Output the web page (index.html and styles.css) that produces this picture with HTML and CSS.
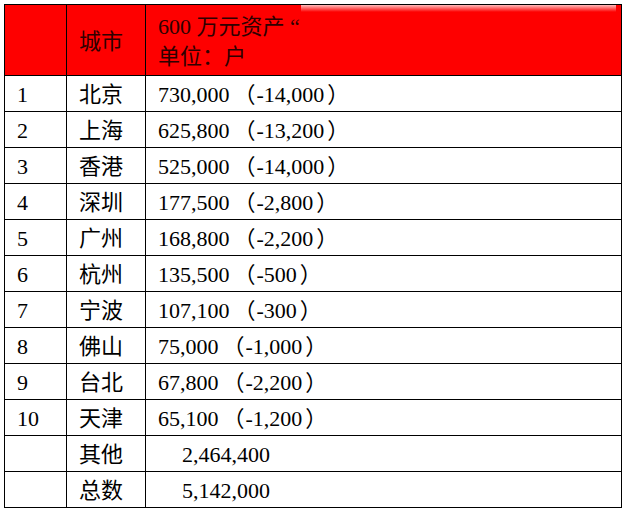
FILE: index.html
```html
<!DOCTYPE html>
<html lang="zh">
<head>
<meta charset="utf-8">
<title>600 万元资产</title>
<link rel="stylesheet" href="styles.css">
</head>
<body>
<table class="t">
  <colgroup><col class="c1"><col class="c2"><col class="c3"></colgroup>
  <thead>
    <tr class="head">
      <th></th>
      <th class="city">城市</th>
      <th class="val"><span class="hl">600 万元资产 “</span><span class="hl">单位：户</span></th>
    </tr>
  </thead>
  <tbody>
    <tr><td>1</td><td>北京</td><td>730,000<span class="lp">（</span>-14,000<span class="rp">）</span></td></tr>
    <tr><td>2</td><td>上海</td><td>625,800<span class="lp">（</span>-13,200<span class="rp">）</span></td></tr>
    <tr><td>3</td><td>香港</td><td>525,000<span class="lp">（</span>-14,000<span class="rp">）</span></td></tr>
    <tr><td>4</td><td>深圳</td><td>177,500<span class="lp">（</span>-2,800<span class="rp">）</span></td></tr>
    <tr><td>5</td><td>广州</td><td>168,800<span class="lp">（</span>-2,200<span class="rp">）</span></td></tr>
    <tr><td>6</td><td>杭州</td><td>135,500<span class="lp">（</span>-500<span class="rp">）</span></td></tr>
    <tr><td>7</td><td>宁波</td><td>107,100<span class="lp">（</span>-300<span class="rp">）</span></td></tr>
    <tr><td>8</td><td>佛山</td><td>75,000<span class="lp">（</span>-1,000<span class="rp">）</span></td></tr>
    <tr><td>9</td><td>台北</td><td>67,800<span class="lp">（</span>-2,200<span class="rp">）</span></td></tr>
    <tr><td>10</td><td>天津</td><td>65,100<span class="lp">（</span>-1,200<span class="rp">）</span></td></tr>
    <tr><td></td><td>其他</td><td class="ind">2,464,400</td></tr>
    <tr><td></td><td>总数</td><td class="ind">5,142,000</td></tr>
  </tbody>
</table>
</body>
</html>
```

FILE: styles.css
```css
html, body {
  margin: 0;
  padding: 0;
  background: #fff;
}
body {
  padding: 4px 0 0 4px;
  font-family: "Liberation Serif", "Noto Sans CJK SC", serif;
  font-size: 22px;
  color: #000;
}
.t {
  border-collapse: collapse;
  table-layout: fixed;
  width: 617px;
}
.c1 { width: 62px; }
.c2 { width: 79px; }
.c3 { width: 476px; }
.t th, .t td {
  border: 1px solid #000;
  padding: 3px 0 0 12px;
  text-align: left;
  vertical-align: middle;
  line-height: 30px;
  white-space: nowrap;
  box-sizing: border-box;
}
.t td { height: 36px; }
.head th {
  height: 71px;
  font-weight: normal;
  color: #2e0000;
  background: #fe0000;
  padding-top: 3px;
}
.head .val {
  background:
    linear-gradient(to bottom, rgba(255,235,235,0.8) 0, rgba(255,0,0,0) 7px) 155px 0 / 315px 100% no-repeat,
    #fe0000;
}
.hl {
  display: block;
  line-height: 30px;
}
.lp { margin: 0 1px 0 4px; }
.rp { margin-left: 3px; }
.t td.ind { padding-left: 36px; }
```
